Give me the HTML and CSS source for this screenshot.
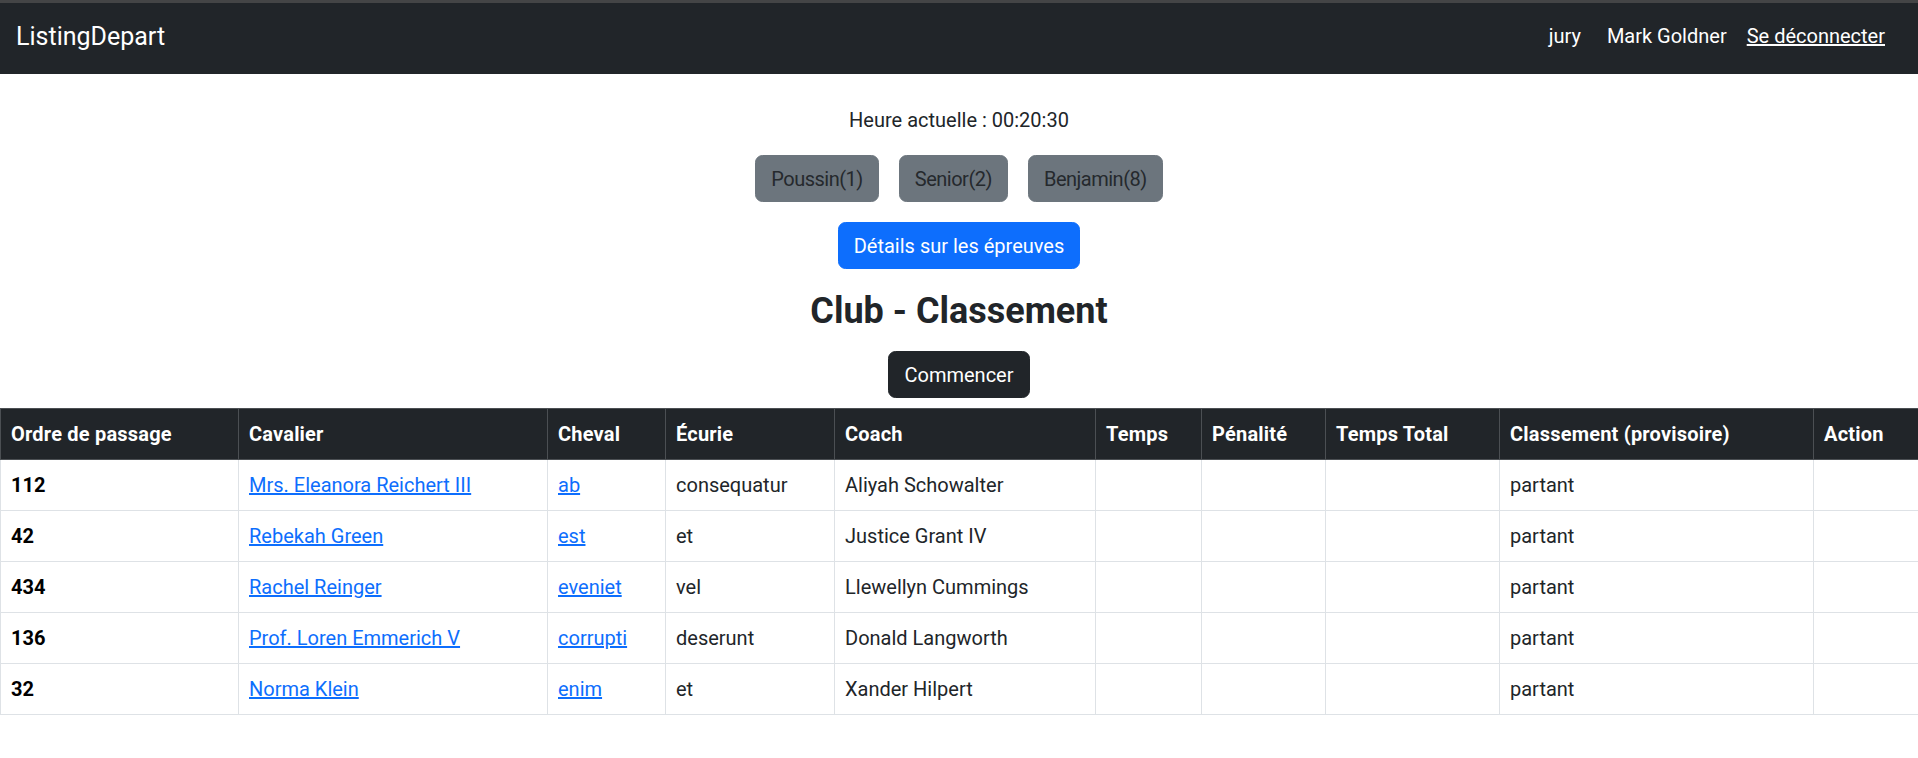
FILE: index.html
```html
<!DOCTYPE html>
<html lang="fr">
<head>
<meta charset="utf-8">
<title>ListingDepart</title>
<link rel="stylesheet" href="styles.css">
</head>
<body>
<header class="topbar">
  <nav class="navbar">
    <a class="brand" href="#">ListingDepart</a>
    <div class="nav-right">
      <span class="nav-item role">jury</span>
      <span class="nav-item user">Mark Goldner</span>
      <a class="nav-item logout" href="#">Se déconnecter</a>
    </div>
  </nav>
</header>
<main class="content">
  <p class="clock">Heure actuelle : 00:20:30</p>
  <div class="categories">
    <button class="btn btn-secondary">Poussin(1)</button>
    <button class="btn btn-secondary">Senior(2)</button>
    <button class="btn btn-secondary">Benjamin(8)</button>
  </div>
  <button class="btn btn-primary">Détails sur les épreuves</button>
  <h2 class="title">Club - Classement</h2>
  <button class="btn btn-dark">Commencer</button>
</main>
<table class="results">
  <colgroup>
    <col class="c-ordre"><col class="c-cavalier"><col class="c-cheval"><col class="c-ecurie"><col class="c-coach"><col class="c-temps"><col class="c-penalite"><col class="c-total"><col class="c-classement"><col class="c-action">
  </colgroup>
  <thead>
    <tr>
      <th>Ordre de passage</th><th>Cavalier</th><th>Cheval</th><th>Écurie</th><th>Coach</th><th>Temps</th><th>Pénalité</th><th>Temps Total</th><th>Classement (provisoire)</th><th>Action</th>
    </tr>
  </thead>
  <tbody>
    <tr><td class="num">112</td><td><a href="#">Mrs. Eleanora Reichert III</a></td><td><a href="#">ab</a></td><td>consequatur</td><td>Aliyah Schowalter</td><td></td><td></td><td></td><td>partant</td><td></td></tr>
    <tr><td class="num">42</td><td><a href="#">Rebekah Green</a></td><td><a href="#">est</a></td><td>et</td><td>Justice Grant IV</td><td></td><td></td><td></td><td>partant</td><td></td></tr>
    <tr><td class="num">434</td><td><a href="#">Rachel Reinger</a></td><td><a href="#">eveniet</a></td><td>vel</td><td>Llewellyn Cummings</td><td></td><td></td><td></td><td>partant</td><td></td></tr>
    <tr><td class="num">136</td><td><a href="#">Prof. Loren Emmerich V</a></td><td><a href="#">corrupti</a></td><td>deserunt</td><td>Donald Langworth</td><td></td><td></td><td></td><td>partant</td><td></td></tr>
    <tr><td class="num">32</td><td><a href="#">Norma Klein</a></td><td><a href="#">enim</a></td><td>et</td><td>Xander Hilpert</td><td></td><td></td><td></td><td>partant</td><td></td></tr>
  </tbody>
</table>
</body>
</html>
```
FILE: styles.css
```css
* { box-sizing: border-box; }
html, body { margin: 0; padding: 0; }
body {
  font-family: Roboto, "Liberation Sans", Arial, sans-serif;
  font-size: 20px;
  line-height: 30px;
  color: #212529;
  background: #fff;
}

.topbar {
  border-top: 3px solid #444546;
  background: #212529;
}
.navbar {
  height: 71px;
  display: flex;
  align-items: center;
  justify-content: space-between;
  padding: 0 33px 0 16px;
}
.brand {
  color: #fff;
  text-decoration: none;
  font-size: 25px;
  line-height: 37px;
  margin-top: -4px;
}
.nav-right {
  display: flex;
  align-items: center;
  margin-top: -6px;
}
.nav-item { color: #fff; }
.role { margin-right: 26px; }
.user { margin-right: 20px; }
.logout { text-decoration: underline; }

.content {
  display: flex;
  flex-direction: column;
  align-items: center;
}
.clock {
  margin: 31px 0 0;
  line-height: 30px;
}
.categories {
  display: flex;
  gap: 20px;
  margin-top: 20px;
}
.btn {
  font-family: inherit;
  font-size: 20px;
  line-height: 30px;
  padding: 7.5px 15px;
  border: 1px solid transparent;
  border-radius: 7.5px;
  cursor: pointer;
}
.btn-secondary {
  background: #6c757d;
  border-color: #6c757d;
  color: #25292d;
  letter-spacing: -0.5px;
}
.btn-primary {
  background: #0d6efd;
  border-color: #0d6efd;
  color: #fff;
  margin-top: 20px;
}
.btn-dark {
  background: #212529;
  border-color: #212529;
  color: #fff;
}
.title {
  font-size: 36px;
  line-height: 48px;
  font-weight: 700;
  margin: 18px 0 16px;
}

.results {
  width: 100%;
  margin-top: 10px;
  border-collapse: collapse;
  table-layout: fixed;
}
.c-ordre { width: 238px; }
.c-cavalier { width: 309px; }
.c-cheval { width: 118px; }
.c-ecurie { width: 169px; }
.c-coach { width: 261px; }
.c-temps { width: 106px; }
.c-penalite { width: 124px; }
.c-total { width: 174px; }
.c-classement { width: 314px; }
.c-action { width: 105px; }

.results th, .results td {
  padding: 10px;
  text-align: left;
  vertical-align: top;
  line-height: 30px;
  white-space: nowrap;
  overflow: hidden;
}
.results th {
  background: #212529;
  color: #fff;
  font-weight: 700;
  letter-spacing: 0.2px;
  border: 1px solid #4b4f53;
}
.results td {
  border: 1px solid #dee2e6;
  color: #212529;
}
.results td.num {
  font-weight: 700;
  color: #000;
}
.results a { color: #0d6efd; text-decoration: underline; }
```
